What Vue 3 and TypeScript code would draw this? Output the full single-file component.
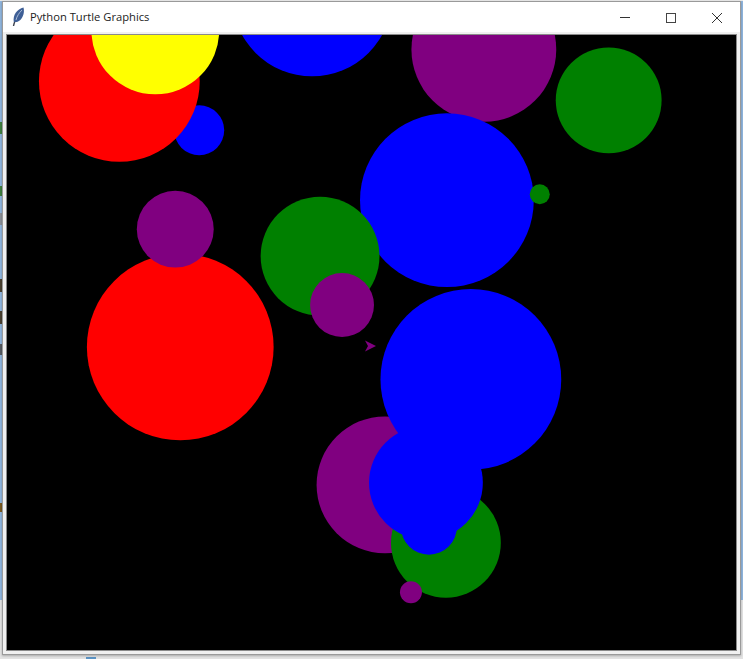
<script setup lang="ts">
interface Ball { x: number; y: number; r: number; c: string }
const ox = 6.5, oy = 35
const balls: Ball[] = [
  { x: 199, y: 130, r: 25, c: '#0000ff' },
  { x: 119, y: 81, r: 80.5, c: '#ff0000' },
  { x: 155, y: 30, r: 64, c: '#ffff00' },
  { x: 312, y: -4, r: 80, c: '#0000ff' },
  { x: 484, y: 49, r: 72.5, c: '#800080' },
  { x: 609, y: 100, r: 53, c: '#008000' },
  { x: 447, y: 200, r: 87, c: '#0000ff' },
  { x: 540, y: 194, r: 10, c: '#008000' },
  { x: 180, y: 347, r: 93.5, c: '#ff0000' },
  { x: 175, y: 229, r: 38.5, c: '#800080' },
  { x: 320, y: 256, r: 59.5, c: '#008000' },
  { x: 342, y: 305, r: 32, c: '#800080' },
  { x: 385, y: 485, r: 68.5, c: '#800080' },
  { x: 471, y: 379.5, r: 90.5, c: '#0000ff' },
  { x: 446, y: 543, r: 55, c: '#008000' },
  { x: 426, y: 483, r: 57, c: '#0000ff' },
  { x: 429, y: 527, r: 28, c: '#0000ff' },
  { x: 411, y: 592.5, r: 11, c: '#800080' }
]
const strips = [
  { top: 122, h: 12, c: '#3f7f3f' },
  { top: 186, h: 10, c: '#3f7f3f' },
  { top: 213, h: 12, c: '#8a8f96' },
  { top: 279, h: 13, c: '#4a4030' },
  { top: 311, h: 13, c: '#4a4030' },
  { top: 344, h: 11, c: '#555a60' },
  { top: 503, h: 9, c: '#7a5a20' }
]
</script>

<template>
  <div class="desk">
    <span v-for="s in strips" :key="s.top" class="strip" :style="{ top: s.top + 'px', height: s.h + 'px', background: s.c }"></span>
    <span class="taskbit"></span>
    <section class="win">
      <header class="bar">
        <svg class="feather" width="13" height="20" viewBox="0 0 13 20">
          <path d="M1.5 19 C2 16 3 14 4 12" stroke="#3a3f4a" stroke-width="1.4" fill="none" />
          <path d="M1.8 15 C0.5 8 5 2 11.5 0.5 C13 6 10.5 13 5 15 Z" fill="#3f5f96" />
          <path d="M4 13 C5 9 7 6 10 3" stroke="#a8bad6" stroke-width="1" fill="none" />
        </svg>
        <span class="title">Python Turtle Graphics</span>
        <div class="controls">
          <svg class="ctl" width="46" height="30" viewBox="0 0 46 30"><path d="M18 15.5H28" stroke="#333" /></svg>
          <svg class="ctl" width="46" height="30" viewBox="0 0 46 30"><rect x="18.5" y="11.5" width="9" height="9" fill="none" stroke="#444" /></svg>
          <svg class="ctl" width="46" height="30" viewBox="0 0 46 30"><path d="M18 11L28 21M28 11L18 21" stroke="#333" fill="none" /></svg>
        </div>
      </header>
      <div class="frame">
        <svg class="canvas" width="730" height="615" :viewBox="`${ox} ${oy} 730 615`">
          <circle v-for="(b, i) in balls" :key="i" :cx="b.x" :cy="b.y" :r="b.r" :fill="b.c" />
          <path d="M365 340.5L376 346L365 351.5L368 346Z" fill="#800080" />
        </svg>
      </div>
    </section>
  </div>
</template>

<style>
html, body { margin: 0; background: #e4e4e4; overflow: hidden; }
</style>

<style scoped>
.desk {
  position: relative;
  width: 743px;
  height: 659px;
  overflow: hidden;
  background: linear-gradient(to bottom, #e8e8e8 0, #e8e8e8 1px, #8fb4dc 1px, #8fb4dc 600px, #e2e2e2 600px);
  font-family: "Open Sans", "Noto Sans", sans-serif;
}
.strip {
  position: absolute;
  left: 0;
  width: 2px;
}
.taskbit {
  position: absolute;
  left: 86px;
  top: 657px;
  width: 10px;
  height: 2px;
  background: #5b93c4;
}
.win {
  position: absolute;
  left: 2px;
  top: 1px;
  width: 739px;
  height: 654px;
  box-sizing: border-box;
  border: 1px solid #9a9a9a;
  background: #f0f0f0;
  display: flex;
  flex-direction: column;
  box-shadow: 0 1px 2px rgba(0, 0, 0, 0.25);
}
.bar {
  height: 30px;
  flex: none;
  background: #fff;
  display: flex;
  align-items: center;
  padding-left: 9px;
}
.feather { flex: none; }
.title {
  margin-left: 5px;
  margin-bottom: 2px;
  font-size: 11.2px;
  color: #222;
}
.controls {
  margin-left: auto;
  display: flex;
}
.ctl { display: block; }
.frame {
  flex: 1;
  padding: 2px 3px 3px 3px;
  display: flex;
}
.canvas {
  display: block;
  background: #000;
  border: 1px solid #8a8a8a;
  box-sizing: content-box;
  margin: 0;
}
</style>
